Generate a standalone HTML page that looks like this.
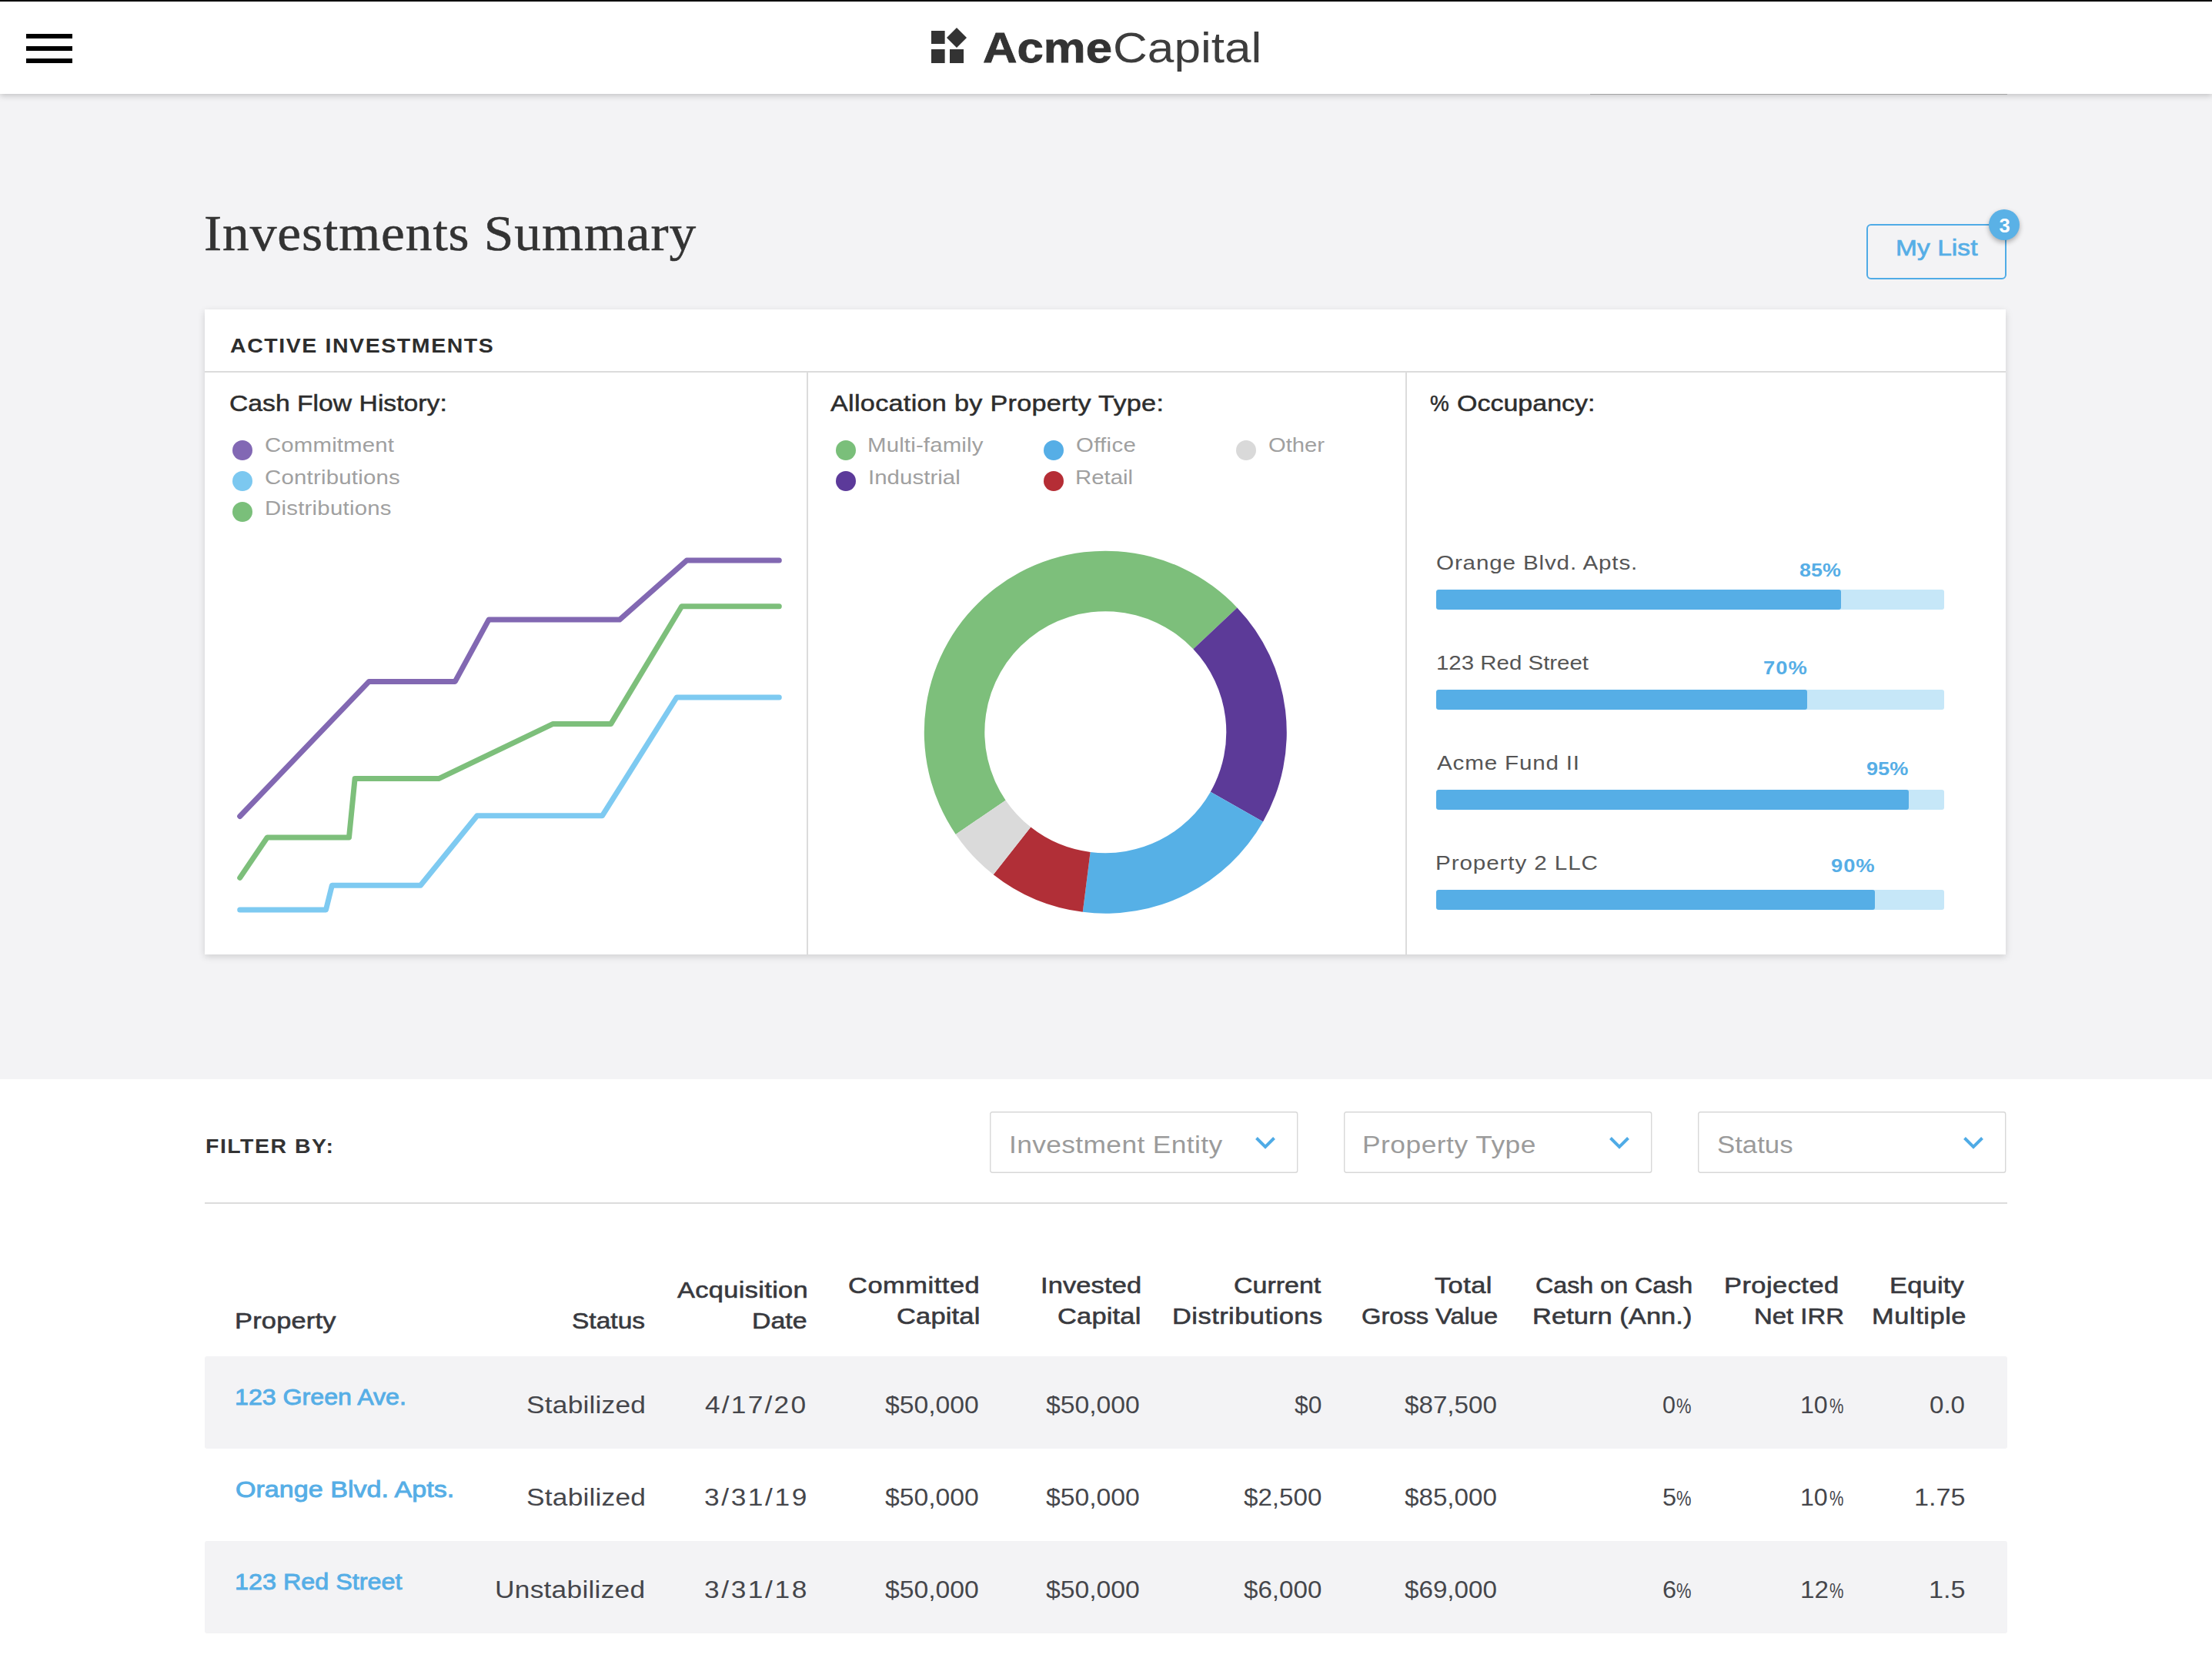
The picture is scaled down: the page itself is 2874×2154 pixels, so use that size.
<!DOCTYPE html>
<html><head><meta charset="utf-8"><title>Investments Summary</title>
<style>
html,body{margin:0;padding:0}
body{width:2874px;height:2154px;overflow:hidden;background:#f3f3f5;position:relative;font-family:"Liberation Sans",sans-serif}
.t{position:absolute;white-space:pre;line-height:1;font-family:"Liberation Sans",sans-serif;transform-origin:0 0}
.abs{position:absolute}
#hdr{position:absolute;left:0;top:0;width:2874px;height:122px;background:#fff;box-shadow:0 2px 8px rgba(0,0,0,.22);z-index:5}
#topline{position:absolute;left:0;top:0;width:2874px;height:2px;background:#000;z-index:6}
.hb{position:absolute;left:34px;width:60px;height:6px;background:#000;z-index:6}
#card{position:absolute;left:266px;top:402px;width:2340px;height:838px;background:#fff;box-shadow:0 3px 9px rgba(0,0,0,.15)}
.hl{position:absolute;background:#dcdcdc}
.dot{position:absolute;width:26px;height:26px;border-radius:50%}
.bar{position:absolute;left:1866px;width:660px;height:26px;border-radius:3px;background:#c6e7f8;overflow:hidden}
.fill{height:26px;background:#56aee6;border-radius:3px}
#white{position:absolute;left:0;top:1402px;width:2874px;height:752px;background:#fff}
.sel{position:absolute;top:1444.4px;width:399.3px;height:79px;box-sizing:border-box;border:2px solid #dedede;border-radius:3px;background:#fff}
.chev{position:absolute;top:1477px}
.row{position:absolute;left:266px;width:2342px;height:120px;background:#f3f3f5;border-radius:3px}
#btn{position:absolute;left:2425px;top:291px;width:182px;height:72px;box-sizing:border-box;border:2px solid #4fabe6;border-radius:6px}
#badge{position:absolute;left:2584px;top:272px;width:40px;height:40px;border-radius:50%;background:#5ab1e6;box-shadow:0 3px 6px rgba(0,0,0,.3)}
</style></head><body>
<div id="white"></div>
<div id="hdr"></div><div id="topline"></div>
<div class="abs" style="left:2066px;top:121.5px;width:542px;height:1.5px;background:rgba(0,0,0,.22);z-index:6"></div>
<div class="hb" style="top:44px"></div><div class="hb" style="top:60px"></div><div class="hb" style="top:76px"></div>
<svg class="abs" style="left:1205px;top:30px;z-index:6" width="60" height="60" viewBox="1205 30 60 60"><g fill="#333"><rect x="1210" y="40" width="17.6" height="17"/><rect x="1210" y="64" width="17.6" height="18"/><rect x="1234" y="64" width="18" height="18"/><path d="M1243 36L1256 49L1243 62L1230 49Z"/></g></svg>
<div id="btn"></div><div id="badge"></div>
<div id="card"></div>
<div class="hl" style="left:266px;top:482px;width:2340px;height:2px"></div>
<div class="hl" style="left:1047.5px;top:484px;width:2px;height:756px"></div>
<div class="hl" style="left:1826px;top:484px;width:2px;height:756px"></div>
<div class="dot" style="left:302px;top:572px;background:#8268b4"></div><div class="dot" style="left:302px;top:612px;background:#7cc8f0"></div><div class="dot" style="left:302px;top:652px;background:#7abf7a"></div><div class="dot" style="left:1086px;top:572px;background:#7abf7a"></div><div class="dot" style="left:1086px;top:612px;background:#5c3a9a"></div><div class="dot" style="left:1356px;top:572px;background:#56aee6"></div><div class="dot" style="left:1356px;top:612px;background:#b52d35"></div><div class="dot" style="left:1605.7px;top:572px;background:#d9d9d9"></div>
<svg class="abs" style="left:266px;top:484px" width="2340" height="756" viewBox="266 484 2340 756">
<polyline points="311.7,1060.5 479.5,885.4 591.3,885.4 635,805.1 805,805.1 892.2,728.1 1012.3,728.1" fill="none" stroke="#8268b2" stroke-width="7" stroke-linecap="round" stroke-linejoin="round"/><polyline points="311.7,1140.4 347.2,1088 453.5,1088 461.1,1011.6 570,1011.6 718.6,940.4 793.8,940.4 885.7,787.8 1012.3,787.8" fill="none" stroke="#7dbf7b" stroke-width="7" stroke-linecap="round" stroke-linejoin="round"/><polyline points="311.7,1182 423.5,1182 431.4,1150.2 546.4,1150.2 619.9,1059.7 782.6,1059.7 879.2,906 1012.3,906" fill="none" stroke="#7ecaf1" stroke-width="7" stroke-linecap="round" stroke-linejoin="round"/>
<path fill="#7dbf7b" d="M1241.75 1083.91A235.5 235.5 0 0 1 1607.41 789.39L1550.37 843.33A157 157 0 0 0 1306.6 1039.67Z"/><path fill="#5c3a98" d="M1607.41 789.39A235.5 235.5 0 0 1 1641.07 1067.52L1572.81 1028.75A157 157 0 0 0 1550.37 843.33Z"/><path fill="#56b0e6" d="M1641.07 1067.52A235.5 235.5 0 0 1 1406.78 1184.84L1416.62 1106.96A157 157 0 0 0 1572.81 1028.75Z"/><path fill="#b12f37" d="M1406.78 1184.84A235.5 235.5 0 0 1 1290.66 1136.27L1339.21 1074.58A157 157 0 0 0 1416.62 1106.96Z"/><path fill="#dadada" d="M1290.66 1136.27A235.5 235.5 0 0 1 1241.75 1083.91L1306.6 1039.67A157 157 0 0 0 1339.21 1074.58Z"/>
</svg>
<div class="bar" style="top:766px"><div class="fill" style="width:525.8px"></div></div><div class="bar" style="top:896px"><div class="fill" style="width:481.7px"></div></div><div class="bar" style="top:1026px"><div class="fill" style="width:613.7px"></div></div><div class="bar" style="top:1156px"><div class="fill" style="width:570px"></div></div>
<div class="hl" style="left:266px;top:1561.5px;width:2342px;height:2px"></div>
<svg class="abs" style="left:1285.4px;top:1443px" width="402" height="82" viewBox="-1 -1 402 82"><rect x="0.7" y="0.8" width="399" height="78.5" rx="2.5" fill="#fff" stroke="#d8d8d8" stroke-width="1.4"/></svg><svg class="chev" style="left:1631.4px" width="26" height="16" viewBox="0 0 26 16"><polyline points="1.5,1.5 13,13 24.5,1.5" fill="none" stroke="#4fabe6" stroke-width="4"/></svg><svg class="abs" style="left:1745.2px;top:1443px" width="402" height="82" viewBox="-1 -1 402 82"><rect x="0.7" y="0.8" width="399" height="78.5" rx="2.5" fill="#fff" stroke="#d8d8d8" stroke-width="1.4"/></svg><svg class="chev" style="left:2091.2px" width="26" height="16" viewBox="0 0 26 16"><polyline points="1.5,1.5 13,13 24.5,1.5" fill="none" stroke="#4fabe6" stroke-width="4"/></svg><svg class="abs" style="left:2205.4px;top:1443px" width="402" height="82" viewBox="-1 -1 402 82"><rect x="0.7" y="0.8" width="399" height="78.5" rx="2.5" fill="#fff" stroke="#d8d8d8" stroke-width="1.4"/></svg><svg class="chev" style="left:2551.4px" width="26" height="16" viewBox="0 0 26 16"><polyline points="1.5,1.5 13,13 24.5,1.5" fill="none" stroke="#4fabe6" stroke-width="4"/></svg>
<div class="row" style="top:1762px"></div><div class="row" style="top:2002px"></div>
<div style="position:absolute;left:0;top:0;z-index:7">
<div class="t" style="left:1276.88px;top:34.66px;font-size:55.2px;color:#333;transform:scaleX(1.1178);font-weight:700;-webkit-text-stroke:0.8px #333">Acme</div>
<div class="t" style="left:1445.75px;top:34.66px;font-size:55.2px;color:#3d3d3d;transform:scaleX(1.1259)">Capital</div>
<div class="t" style="left:265.38px;top:271.45px;font-size:65.5px;color:#333;letter-spacing:0.86px;transform:scaleX(1.0600);font-family:'Liberation Serif',serif;-webkit-text-stroke:0.5px #333">Investments Summary</div>
<div class="t" style="left:2462.72px;top:307.19px;font-size:29.3px;color:#56aee6;letter-spacing:0.1px;transform:scaleX(1.1400);-webkit-text-stroke:0.7px #56aee6">My List</div>
<div class="t" style="left:299px;top:436.83px;font-size:25px;color:#2d2d2d;letter-spacing:1.38px;transform:scaleX(1.1400);font-weight:700">ACTIVE INVESTMENTS</div>
<div class="t" style="left:297.88px;top:508.6px;font-size:30px;color:#2d2d2d;transform:scaleX(1.1233);-webkit-text-stroke:0.5px #2d2d2d">Cash Flow History:</div>
<div class="t" style="left:1079px;top:508.6px;font-size:30px;color:#2d2d2d;letter-spacing:0.25px;transform:scaleX(1.1400);-webkit-text-stroke:0.5px #2d2d2d">Allocation by Property Type:</div>
<div class="t" style="left:1858.07px;top:508.6px;font-size:30px;color:#2d2d2d;transform:scaleX(0.9280);-webkit-text-stroke:0.5px #2d2d2d">%</div>
<div class="t" style="left:1892.67px;top:508.6px;font-size:30px;color:#2d2d2d;transform:scaleX(1.1330);-webkit-text-stroke:0.5px #2d2d2d">Occupancy:</div>
<div class="t" style="left:344.26px;top:566.46px;font-size:25.8px;color:#a0a0a0;letter-spacing:0.12px;transform:scaleX(1.1400)">Commitment</div>
<div class="t" style="left:344.26px;top:608.46px;font-size:25.8px;color:#a0a0a0;letter-spacing:0.18px;transform:scaleX(1.1400)">Contributions</div>
<div class="t" style="left:343.72px;top:648.46px;font-size:25.8px;color:#a0a0a0;letter-spacing:0.2px;transform:scaleX(1.1400)">Distributions</div>
<div class="t" style="left:1127.42px;top:566.46px;font-size:25.8px;color:#a0a0a0;letter-spacing:0.14px;transform:scaleX(1.1400)">Multi-family</div>
<div class="t" style="left:1128.02px;top:608.46px;font-size:25.8px;color:#a0a0a0;letter-spacing:0.04px;transform:scaleX(1.1400)">Industrial</div>
<div class="t" style="left:1397.66px;top:566.46px;font-size:25.8px;color:#a0a0a0;letter-spacing:0.26px;transform:scaleX(1.1400)">Office</div>
<div class="t" style="left:1397.22px;top:608.46px;font-size:25.8px;color:#a0a0a0;transform:scaleX(1.1395)">Retail</div>
<div class="t" style="left:1648.27px;top:566.46px;font-size:25.8px;color:#a0a0a0;transform:scaleX(1.1310)">Other</div>
<div class="t" style="left:1866.06px;top:718.19px;font-size:26px;color:#555;letter-spacing:0.73px;transform:scaleX(1.1400)">Orange Blvd. Apts.</div>
<div class="t" style="left:1866.07px;top:848.19px;font-size:26px;color:#555;transform:scaleX(1.1324)">123 Red Street</div>
<div class="t" style="left:1867.2px;top:978.19px;font-size:26px;color:#555;letter-spacing:0.7px;transform:scaleX(1.1400)">Acme Fund II</div>
<div class="t" style="left:1864.92px;top:1108.19px;font-size:26px;color:#555;letter-spacing:0.78px;transform:scaleX(1.1400)">Property 2 LLC</div>
<div class="t" style="left:2338px;top:729.08px;font-size:24px;color:#56aee6;transform:scaleX(1.1196);font-weight:700">85%</div>
<div class="t" style="left:2290.86px;top:855.88px;font-size:24px;color:#56aee6;letter-spacing:0.91px;transform:scaleX(1.1400);font-weight:700">70%</div>
<div class="t" style="left:2425px;top:987.18px;font-size:24px;color:#56aee6;transform:scaleX(1.1322);font-weight:700">95%</div>
<div class="t" style="left:2378.8px;top:1113.38px;font-size:24px;color:#56aee6;letter-spacing:0.8px;transform:scaleX(1.1400);font-weight:700">90%</div>
<div class="t" style="left:266.76px;top:1477.03px;font-size:25px;color:#333;letter-spacing:1.31px;transform:scaleX(1.1400);font-weight:700">FILTER BY:</div>
<div class="t" style="left:1310.62px;top:1471.55px;font-size:31px;color:#9b9b9b;letter-spacing:0.33px;transform:scaleX(1.1400)">Investment Entity</div>
<div class="t" style="left:1770.32px;top:1471.55px;font-size:31px;color:#9b9b9b;letter-spacing:0.44px;transform:scaleX(1.1400)">Property Type</div>
<div class="t" style="left:2230.68px;top:1471.55px;font-size:31px;color:#9b9b9b;transform:scaleX(1.1217)">Status</div>
<div class="t" style="left:304.92px;top:1700.73px;font-size:30.2px;color:#38393e;letter-spacing:0.17px;transform:scaleX(1.1400);-webkit-text-stroke:0.6px #38393e">Property</div>
<div class="t" style="left:743.39px;top:1700.73px;font-size:30.2px;color:#38393e;transform:scaleX(1.1104);-webkit-text-stroke:0.6px #38393e">Status</div>
<div class="t" style="left:879.5px;top:1660.63px;font-size:30.2px;color:#38393e;letter-spacing:0.29px;transform:scaleX(1.1400);-webkit-text-stroke:0.6px #38393e">Acquisition</div>
<div class="t" style="left:976.56px;top:1700.73px;font-size:30.2px;color:#38393e;transform:scaleX(1.1217);-webkit-text-stroke:0.6px #38393e">Date</div>
<div class="t" style="left:1102.46px;top:1655.23px;font-size:30.2px;color:#38393e;letter-spacing:0.48px;transform:scaleX(1.1400);-webkit-text-stroke:0.6px #38393e">Committed</div>
<div class="t" style="left:1164.86px;top:1695.43px;font-size:30.2px;color:#38393e;letter-spacing:0.17px;transform:scaleX(1.1400);-webkit-text-stroke:0.6px #38393e">Capital</div>
<div class="t" style="left:1351.72px;top:1655.23px;font-size:30.2px;color:#38393e;letter-spacing:0.12px;transform:scaleX(1.1400);-webkit-text-stroke:0.6px #38393e">Invested</div>
<div class="t" style="left:1374.36px;top:1695.43px;font-size:30.2px;color:#38393e;letter-spacing:0.17px;transform:scaleX(1.1400);-webkit-text-stroke:0.6px #38393e">Capital</div>
<div class="t" style="left:1603.28px;top:1655.23px;font-size:30.2px;color:#38393e;transform:scaleX(1.1249);-webkit-text-stroke:0.6px #38393e">Current</div>
<div class="t" style="left:1523.42px;top:1695.43px;font-size:30.2px;color:#38393e;letter-spacing:0.42px;transform:scaleX(1.1400);-webkit-text-stroke:0.6px #38393e">Distributions</div>
<div class="t" style="left:1864px;top:1655.23px;font-size:30.2px;color:#38393e;letter-spacing:0.36px;transform:scaleX(1.1400);-webkit-text-stroke:0.6px #38393e">Total</div>
<div class="t" style="left:1768.72px;top:1695.43px;font-size:30.2px;color:#38393e;transform:scaleX(1.0810);-webkit-text-stroke:0.6px #38393e">Gross Value</div>
<div class="t" style="left:1994.93px;top:1655.23px;font-size:30.2px;color:#38393e;transform:scaleX(1.0679);-webkit-text-stroke:0.6px #38393e">Cash on Cash</div>
<div class="t" style="left:1991.12px;top:1695.43px;font-size:30.2px;color:#38393e;letter-spacing:0.06px;transform:scaleX(1.1400);-webkit-text-stroke:0.6px #38393e">Return (Ann.)</div>
<div class="t" style="left:2239.52px;top:1655.23px;font-size:30.2px;color:#38393e;letter-spacing:0.41px;transform:scaleX(1.1400);-webkit-text-stroke:0.6px #38393e">Projected</div>
<div class="t" style="left:2278.72px;top:1695.43px;font-size:30.2px;color:#38393e;transform:scaleX(1.0894);-webkit-text-stroke:0.6px #38393e">Net IRR</div>
<div class="t" style="left:2455.42px;top:1655.23px;font-size:30.2px;color:#38393e;letter-spacing:0.19px;transform:scaleX(1.1400);-webkit-text-stroke:0.6px #38393e">Equity</div>
<div class="t" style="left:2431.62px;top:1695.43px;font-size:30.2px;color:#38393e;letter-spacing:0.49px;transform:scaleX(1.1400);-webkit-text-stroke:0.6px #38393e">Multiple</div>
<div class="t" style="left:304.88px;top:1800.34px;font-size:30.3px;color:#56aee6;transform:scaleX(1.0615);-webkit-text-stroke:0.9px #56aee6">123 Green Ave.</div>
<div class="t" style="left:305.87px;top:1920.34px;font-size:30.3px;color:#56aee6;transform:scaleX(1.1253);-webkit-text-stroke:0.9px #56aee6">Orange Blvd. Apts.</div>
<div class="t" style="left:304.87px;top:2040.34px;font-size:30.3px;color:#56aee6;transform:scaleX(1.0673);-webkit-text-stroke:0.9px #56aee6">123 Red Street</div>
<div class="t" style="left:683.66px;top:1810.05px;font-size:31px;color:#45464b;letter-spacing:0.17px;transform:scaleX(1.1400)">Stabilized</div>
<div class="t" style="left:916.4px;top:1810.05px;font-size:31px;color:#45464b;letter-spacing:1.92px;transform:scaleX(1.1400)">4/17/20</div>
<div class="t" style="left:1149.7px;top:1810.05px;font-size:31px;color:#45464b;transform:scaleX(1.0866)">$50,000</div>
<div class="t" style="left:1359.2px;top:1810.05px;font-size:31px;color:#45464b;transform:scaleX(1.0866)">$50,000</div>
<div class="t" style="left:1681.7px;top:1810.05px;font-size:31px;color:#45464b;transform:scaleX(1.0251)">$0</div>
<div class="t" style="left:1824.6px;top:1810.05px;font-size:31px;color:#45464b;transform:scaleX(1.0705)">$87,500</div>
<div class="t" style="left:2160.22px;top:1810.05px;font-size:31px;color:#45464b;transform:scaleX(0.9813)">0</div>
<div class="t" style="left:2178.22px;top:1812.59px;font-size:28px;color:#45464b;transform:scaleX(0.7826)">%</div>
<div class="t" style="left:2338.83px;top:1810.05px;font-size:31px;color:#45464b;transform:scaleX(1.0360)">10</div>
<div class="t" style="left:2377.46px;top:1812.59px;font-size:28px;color:#45464b;transform:scaleX(0.7391)">%</div>
<div class="t" style="left:2506.73px;top:1810.05px;font-size:31px;color:#45464b;transform:scaleX(1.0680)">0.0</div>
<div class="t" style="left:683.66px;top:1930.05px;font-size:31px;color:#45464b;letter-spacing:0.17px;transform:scaleX(1.1400)">Stabilized</div>
<div class="t" style="left:915.26px;top:1930.05px;font-size:31px;color:#45464b;letter-spacing:2.26px;transform:scaleX(1.1400)">3/31/19</div>
<div class="t" style="left:1149.7px;top:1930.05px;font-size:31px;color:#45464b;transform:scaleX(1.0866)">$50,000</div>
<div class="t" style="left:1359.2px;top:1930.05px;font-size:31px;color:#45464b;transform:scaleX(1.0866)">$50,000</div>
<div class="t" style="left:1615.7px;top:1930.05px;font-size:31px;color:#45464b;transform:scaleX(1.0690)">$2,500</div>
<div class="t" style="left:1824.6px;top:1930.05px;font-size:31px;color:#45464b;transform:scaleX(1.0705)">$85,000</div>
<div class="t" style="left:2160.15px;top:1930.05px;font-size:31px;color:#45464b;transform:scaleX(1.0467)">5</div>
<div class="t" style="left:2178.22px;top:1932.59px;font-size:28px;color:#45464b;transform:scaleX(0.7826)">%</div>
<div class="t" style="left:2338.83px;top:1930.05px;font-size:31px;color:#45464b;transform:scaleX(1.0360)">10</div>
<div class="t" style="left:2377.46px;top:1932.59px;font-size:28px;color:#45464b;transform:scaleX(0.7391)">%</div>
<div class="t" style="left:2487.4px;top:1930.05px;font-size:31px;color:#45464b;transform:scaleX(1.1017)">1.75</div>
<div class="t" style="left:643.42px;top:2050.05px;font-size:31px;color:#45464b;letter-spacing:0.21px;transform:scaleX(1.1400)">Unstabilized</div>
<div class="t" style="left:915.26px;top:2050.05px;font-size:31px;color:#45464b;letter-spacing:2.26px;transform:scaleX(1.1400)">3/31/18</div>
<div class="t" style="left:1149.7px;top:2050.05px;font-size:31px;color:#45464b;transform:scaleX(1.0866)">$50,000</div>
<div class="t" style="left:1359.2px;top:2050.05px;font-size:31px;color:#45464b;transform:scaleX(1.0866)">$50,000</div>
<div class="t" style="left:1615.7px;top:2050.05px;font-size:31px;color:#45464b;transform:scaleX(1.0690)">$6,000</div>
<div class="t" style="left:1824.6px;top:2050.05px;font-size:31px;color:#45464b;transform:scaleX(1.0705)">$69,000</div>
<div class="t" style="left:2160.15px;top:2050.05px;font-size:31px;color:#45464b;transform:scaleX(1.0467)">6</div>
<div class="t" style="left:2178.22px;top:2052.59px;font-size:28px;color:#45464b;transform:scaleX(0.7826)">%</div>
<div class="t" style="left:2338.76px;top:2050.05px;font-size:31px;color:#45464b;transform:scaleX(1.0691)">12</div>
<div class="t" style="left:2377.46px;top:2052.59px;font-size:28px;color:#45464b;transform:scaleX(0.7391)">%</div>
<div class="t" style="left:2506.29px;top:2050.05px;font-size:31px;color:#45464b;transform:scaleX(1.1040)">1.5</div>
<div class="t" style="left:2597.5px;top:281px;font-size:25.5px;font-weight:700;color:#fff">3</div>
</div>
</body></html>
